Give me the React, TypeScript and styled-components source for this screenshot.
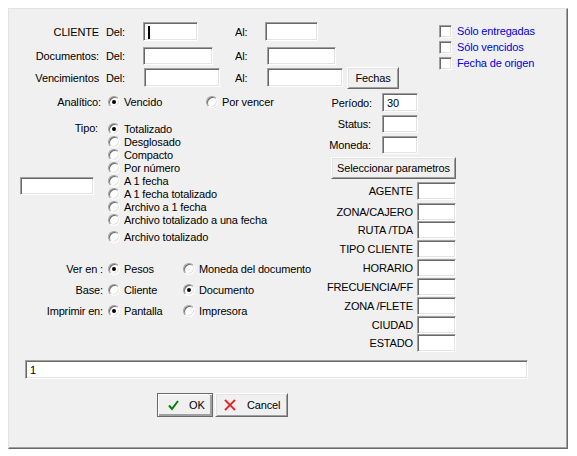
import React from "react";
import styled, { createGlobalStyle } from "styled-components";

const GlobalStyle = createGlobalStyle`
  html, body {
    margin: 0;
    background: #fff;
  }
  body {
    font-family: "Liberation Sans", Arial, sans-serif;
    font-size: 11px;
    letter-spacing: -0.15px;
    color: #000;
  }
  * {
    box-sizing: border-box;
  }
`;

const Page = styled.div`
  padding: 8px;
`;

const Panel = styled.div`
  width: 560px;
  height: 441px;
  background: #f0f0f0;
  border-top: 1px solid #e3e3e3;
  border-left: 1px solid #e3e3e3;
  border-right: 1px solid #696969;
  border-bottom: 1px solid #696969;
  box-shadow: inset -1px -1px 0 #a0a0a0;
`;

const TopSection = styled.div`
  display: flex;
  margin-top: 13px;
`;

const FieldGrid = styled.div`
  width: 390px;
  display: flex;
  flex-direction: column;
`;

const FieldRow = styled.div<{ h: number; mt: number }>`
  display: grid;
  grid-template-columns: 97px 37px 92px 30px 82px 52px;
  align-items: center;
  height: ${(p) => p.h}px;
  margin-top: ${(p) => p.mt}px;
`;

const RowLabel = styled.div<{ pr?: number }>`
  text-align: right;
  padding-right: ${(p) => p.pr ?? 7}px;
  white-space: nowrap;
`;

const Text = styled.span`
  white-space: nowrap;
`;

const Input = styled.div<{ w: number; h?: number; ml?: number }>`
  position: relative;
  width: ${(p) => p.w}px;
  height: ${(p) => p.h ?? 19}px;
  margin-left: ${(p) => p.ml ?? 0}px;
  background: #fff;
  border: 1px solid;
  border-color: #a0a0a0 #fff #fff #a0a0a0;
  box-shadow: inset 1px 1px 0 #696969, inset -1px -1px 0 #e3e3e3;
  padding: 2px 4px 0 4px;
  line-height: 14px;
  white-space: nowrap;
`;

const Caret = styled.span`
  display: inline-block;
  width: 2px;
  height: 13px;
  background: #000;
  margin-top: 1px;
`;

const Button = styled.button<{ w: number; h: number; ml?: number; isDefault?: boolean }>`
  width: ${(p) => p.w}px;
  height: ${(p) => p.h}px;
  margin-left: ${(p) => p.ml ?? 0}px;
  padding: 0;
  background: #f0f0f0;
  font-family: inherit;
  font-size: 11px;
  letter-spacing: inherit;
  color: #000;
  border: 1px solid;
  border-color: ${(p) =>
    p.isDefault ? "#696969" : "#fff #696969 #696969 #fff"};
  box-shadow: ${(p) =>
    p.isDefault
      ? "inset 1px 1px 0 #fff, inset -2px -2px 0 #a0a0a0"
      : "inset 1px 1px 0 #e3e3e3, inset -1px -1px 0 #a0a0a0"};
  display: flex;
  align-items: center;
  justify-content: center;
  white-space: nowrap;
`;

const IconButton = styled(Button)<{ pl: number; gap: number }>`
  justify-content: flex-start;
  padding-left: ${(p) => p.pl}px;
  gap: ${(p) => p.gap}px;
`;

const CheckColumn = styled.div`
  margin-left: 40px;
  padding-top: 1px;
  display: flex;
  flex-direction: column;
`;

const CheckRow = styled.label`
  display: flex;
  align-items: center;
  height: 16px;
  color: #0000e0;
  gap: 5px;
`;

const CheckBox = styled.span`
  width: 13px;
  height: 13px;
  background: #fff;
  border: 1px solid;
  border-color: #a0a0a0 #fff #fff #a0a0a0;
  box-shadow: inset 1px 1px 0 #696969, inset -1px -1px 0 #e3e3e3;
`;

const MiddleSection = styled.div`
  display: flex;
  height: 263px;
`;

const LeftArea = styled.div`
  width: 316px;
  display: flex;
  flex-direction: column;
`;

const OptionRow = styled.div<{ cols: string; mt: number }>`
  display: grid;
  grid-template-columns: ${(p) => p.cols};
  align-items: center;
  height: 15px;
  margin-top: ${(p) => p.mt}px;
`;

const RadioOption = styled.div`
  display: flex;
  align-items: center;
  white-space: nowrap;
`;

const RadioCircle = styled.span<{ checked?: boolean }>`
  position: relative;
  width: 12px;
  height: 12px;
  flex: none;
  border-radius: 50%;
  background: #fff;
  border: 1px solid;
  border-color: #a0a0a0 #fff #fff #a0a0a0;
  box-shadow: inset 1px 1px 0 #696969, inset -1px -1px 0 #e3e3e3;
  margin-right: 4px;
  &::after {
    content: "";
    display: ${(p) => (p.checked ? "block" : "none")};
    position: absolute;
    left: 3px;
    top: 3px;
    width: 4px;
    height: 4px;
    border-radius: 50%;
    background: #000;
  }
`;

const TipoBlock = styled.div`
  display: grid;
  grid-template-columns: 99px auto;
  margin-top: 13px;
`;

const TipoLeft = styled.div`
  display: flex;
  flex-direction: column;
`;

const TipoLabel = styled.div`
  height: 13px;
  line-height: 13px;
  text-align: right;
  padding-right: 10px;
`;

const TipoInputWrap = styled.div`
  margin-top: 42px;
  padding-left: 11px;
`;

const TipoList = styled.div`
  display: flex;
  flex-direction: column;
`;

const TipoItem = styled(RadioOption)<{ mt?: number }>`
  height: 13px;
  margin-top: ${(p) => p.mt ?? 0}px;
`;

const RightArea = styled.div`
  display: flex;
  flex-direction: column;
`;

const SmallRow = styled.div<{ mt: number; h: number }>`
  display: grid;
  grid-template-columns: 57px 36px;
  align-items: center;
  margin-top: ${(p) => p.mt}px;
  height: ${(p) => p.h}px;
`;

const ParamRow = styled.div<{ mt: number }>`
  display: grid;
  grid-template-columns: 92px 39px;
  align-items: center;
  margin-top: ${(p) => p.mt}px;
  height: 18px;
`;

const BottomInput = styled(Input)`
  margin-top: 8px;
`;

const ButtonRow = styled.div`
  display: flex;
  gap: 2px;
  margin-top: 14px;
  padding-left: 148px;
`;

const CheckIcon = () => (
  <svg width="11" height="11" viewBox="0 0 11 11">
    <path d="M1 5.5 L4 9 L10 1" fill="none" stroke="#008000" strokeWidth="2" />
  </svg>
);

const CrossIcon = () => (
  <svg width="12" height="12" viewBox="0 0 12 12">
    <path d="M1 1 L11 11 M11 1 L1 11" stroke="#f08080" strokeWidth="2.4" />
    <path d="M1 1 L11 11 M11 1 L1 11" stroke="#e01818" strokeWidth="1.3" />
  </svg>
);

const tipos = [
  "Totalizado",
  "Desglosado",
  "Compacto",
  "Por número",
  "A 1 fecha",
  "A 1 fecha totalizado",
  "Archivo a 1 fecha",
  "Archivo totalizado a una fecha",
];

const params: [string, number][] = [
  ["AGENTE", 3],
  ["ZONA/CAJERO", 3],
  ["RUTA /TDA", 0],
  ["TIPO CLIENTE", 1],
  ["HORARIO", 1],
  ["FRECUENCIA/FF", 1],
  ["ZONA /FLETE", 1],
  ["CIUDAD", 1],
  ["ESTADO", 0],
];

const Radio: React.FC<{ label: string; checked?: boolean }> = ({ label, checked }) => (
  <RadioOption>
    <RadioCircle checked={checked} />
    {label}
  </RadioOption>
);

const App: React.FC = () => {
  return (
    <Page>
      <GlobalStyle />
      <Panel>
        <TopSection>
          <FieldGrid>
            <FieldRow h={19} mt={0}>
              <RowLabel>CLIENTE</RowLabel>
              <Text>Del:</Text>
              <Input w={55}>
                <Caret />
              </Input>
              <Text>Al:</Text>
              <Input w={53} />
            </FieldRow>
            <FieldRow h={18} mt={6}>
              <RowLabel>Documentos:</RowLabel>
              <Text>Del:</Text>
              <Input w={70} h={18} />
              <Text>Al:</Text>
              <Input w={69} h={18} ml={2} />
            </FieldRow>
            <FieldRow h={23} mt={1}>
              <RowLabel>Vencimientos</RowLabel>
              <Text>Del:</Text>
              <Input w={76} ml={1} />
              <Text>Al:</Text>
              <Input w={76} ml={2} />
              <Button w={52} h={22}>
                Fechas
              </Button>
            </FieldRow>
          </FieldGrid>
          <CheckColumn>
            <CheckRow>
              <CheckBox />
              Sólo entregadas
            </CheckRow>
            <CheckRow>
              <CheckBox />
              Sólo vencidos
            </CheckRow>
            <CheckRow>
              <CheckBox />
              Fecha de origen
            </CheckRow>
          </CheckColumn>
        </TopSection>

        <MiddleSection>
          <LeftArea>
            <OptionRow cols="99px 98px auto" mt={5}>
              <RowLabel>Analítico:</RowLabel>
              <Radio label="Vencido" checked />
              <Radio label="Por vencer" />
            </OptionRow>

            <TipoBlock>
              <TipoLeft>
                <TipoLabel>Tipo:</TipoLabel>
                <TipoInputWrap>
                  <Input w={74} h={18} />
                </TipoInputWrap>
              </TipoLeft>
              <TipoList>
                {tipos.map((t, i) => (
                  <TipoItem key={t}>
                    <RadioCircle checked={i === 0} />
                    {t}
                  </TipoItem>
                ))}
                <TipoItem mt={4}>
                  <RadioCircle />
                  Archivo totalizado
                </TipoItem>
              </TipoList>
            </TipoBlock>

            <OptionRow cols="99px 75px auto" mt={18}>
              <RowLabel pr={5}>Ver en :</RowLabel>
              <Radio label="Pesos" checked />
              <Radio label="Moneda del documento" />
            </OptionRow>
            <OptionRow cols="99px 75px auto" mt={6}>
              <RowLabel pr={5}>Base:</RowLabel>
              <Radio label="Cliente" />
              <Radio label="Documento" checked />
            </OptionRow>
            <OptionRow cols="99px 75px auto" mt={6}>
              <RowLabel pr={5}>Imprimir en:</RowLabel>
              <Radio label="Pantalla" checked />
              <Radio label="Impresora" />
            </OptionRow>
          </LeftArea>

          <RightArea>
            <SmallRow mt={4} h={19}>
              <RowLabel pr={10}>Período:</RowLabel>
              <Input w={36}>30</Input>
            </SmallRow>
            <SmallRow mt={3} h={18}>
              <RowLabel pr={11}>Status:</RowLabel>
              <Input w={36} h={18} />
            </SmallRow>
            <SmallRow mt={3} h={18}>
              <RowLabel pr={11}>Moneda:</RowLabel>
              <Input w={36} h={18} />
            </SmallRow>
            <Button w={125} h={22} ml={6} style={{ marginTop: 3 }}>
              Seleccionar parametros
            </Button>
            {params.map(([label, mt]) => (
              <ParamRow key={label} mt={mt}>
                <RowLabel pr={4}>{label}</RowLabel>
                <Input w={39} h={18} />
              </ParamRow>
            ))}
          </RightArea>
        </MiddleSection>

        <BottomInput w={503} ml={16}>
          1
        </BottomInput>

        <ButtonRow>
          <IconButton w={56} h={24} pl={10} gap={10} isDefault>
            <CheckIcon />
            OK
          </IconButton>
          <IconButton w={73} h={24} pl={8} gap={11}>
            <CrossIcon />
            Cancel
          </IconButton>
        </ButtonRow>
      </Panel>
    </Page>
  );
};

export default App;
